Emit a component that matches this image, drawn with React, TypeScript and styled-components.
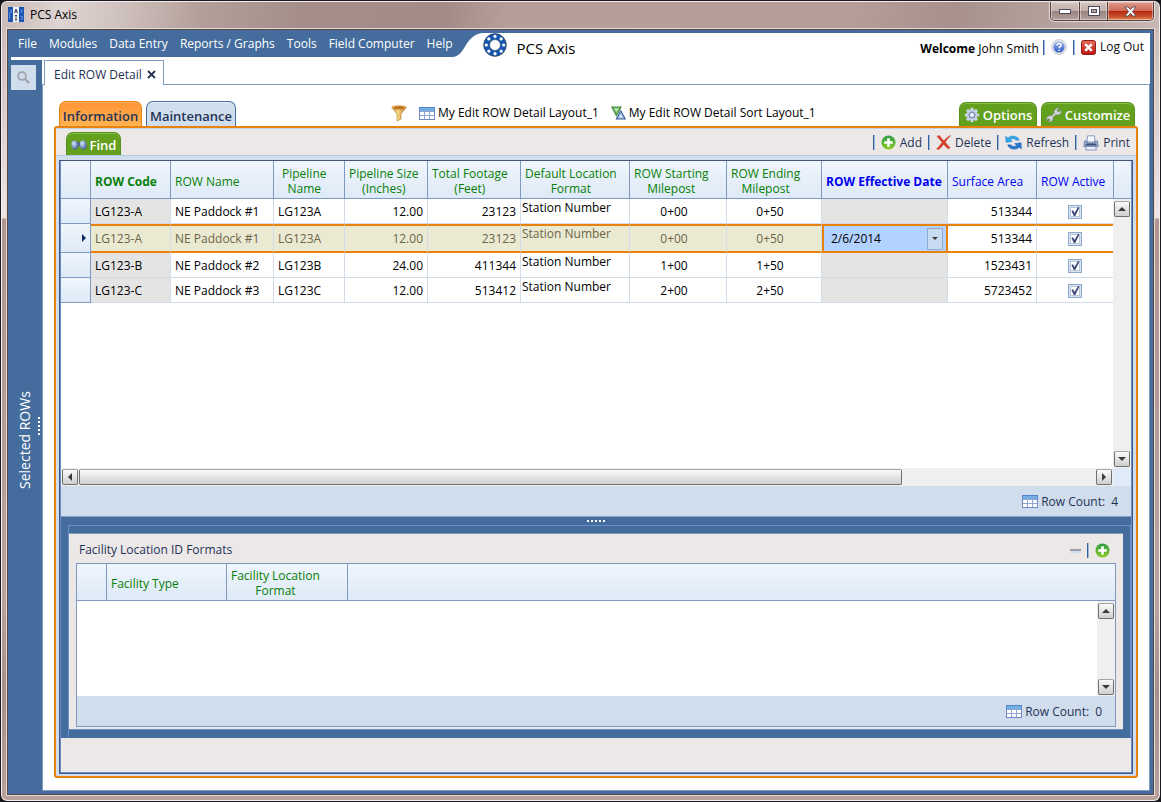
import React from 'react';
import styled, { createGlobalStyle, css } from 'styled-components';

const c = {
  blue: '#446c9c',
  line: '#8099c0',
  pale: '#d0dded',
  grey: '#ece8e7',
  orange: '#e8820c',
  navy: '#1f3357',
  green: '#62a01e',
};

const Global = createGlobalStyle`
  * { box-sizing: border-box; }
  html, body { margin: 0; padding: 0; background: #17161c; }
  body, button, input, table { font-family: "Open Sans", "Noto Sans", sans-serif; font-size: 12px; line-height: 16px; }
  button { padding: 0; border: 0; background: none; color: inherit; cursor: pointer; white-space: nowrap; }
  svg { display: block; flex: none; }
`;

/* ---------- window frame ---------- */

const WindowFrame = styled.div`
  min-height: 100vh;
  display: flex;
  flex-direction: column;
  padding: 0 6px 6px;
  border: 1px solid #1c1a20;
  border-radius: 7px;
  background: linear-gradient(180deg, #c9b8b4 0, #ddcfcd 120px, #f0e6e5 217px, #b0968f 218px, #b59d97 430px, #baa39d 600px, #a68f8a 690px, #b9a29c 800px);
  box-shadow: inset 0 0 0 1px #f3eceb;
`;

const TitleBar = styled.div`
  height: 27px;
  margin: 1px -5px 0;
  padding-left: 6px;
  display: flex;
  align-items: flex-start;
  border-radius: 6px 6px 0 0;
  background: linear-gradient(100deg, #c9bab6 0, #ded4d1 60px, #d2c5c1 110px, #b39e99 200px, #a58e89 300px, #a38c87 440px, #b79f99 500px, #b59e98 840px, #a8918c 940px, #b5a19c 1040px, #c9bcb9 1160px);
`;

const TitleText = styled.div`
  padding: 5px 0 0 6px;
  flex: 1;
  color: #000;
`;

const AppIcon = styled.div`
  padding-top: 5px;
`;

const WindowButtons = styled.div`
  display: flex;
  height: 19px;
  margin: 0 5px 0 0;
  border: 1px solid #55413f;
  border-top: 0;
  border-radius: 0 0 5px 5px;
  overflow: hidden;
  box-shadow: 0 0 1px 1px #e5dbd8;
`;

const WindowButton = styled.button<{ $close?: boolean }>`
  width: ${(p) => (p.$close ? 46 : 28)}px;
  display: flex;
  align-items: center;
  justify-content: center;
  background: ${(p) =>
    p.$close
      ? 'linear-gradient(180deg, #dc9a8b 0, #cf6c58 48%, #b3280f 52%, #c8502c 80%, #e08a58 100%)'
      : 'linear-gradient(180deg, #d3c4c1 0, #c2b0ac 48%, #99827e 52%, #b5a29d 100%)'};
  box-shadow: inset 0 0 0 1px rgba(255, 255, 255, 0.4);
  & + & { border-left: 1px solid #55413f; }
`;

const Client = styled.div`
  flex: 1;
  display: flex;
  flex-direction: column;
  padding: 0 3px 3px;
  border: 1px solid #584947;
  outline: 1px solid #e4dbd9;
  background: ${c.blue};
`;

/* ---------- menu bar ---------- */

const Header = styled.header`
  display: flex;
  height: 27px;
`;

const Menu = styled.nav`
  display: flex;
  align-items: center;
  gap: 12px;
  padding: 1px 0 0 7px;
  color: #fff;
`;

const Curve = styled.svg`
  margin-top: 3px;
`;

const Banner = styled.div`
  flex: 1;
  display: flex;
  align-items: center;
  margin-top: 3px;
  padding-right: 6px;
  background: #fff;
`;

const ProductName = styled.h1`
  margin: 0 auto 0 10px;
  font-size: 15px;
  line-height: 20px;
  font-weight: 400;
  color: #000;
  padding-top: 5px;
`;

const Welcome = styled.span`
  color: #000;
  white-space: nowrap;
  padding-top: 7px;
`;

const Separator = styled.span`
  width: 2px;
  height: 15px;
  background: linear-gradient(90deg, #34629a 50%, #9db8d8 50%);
`;

const BannerTools = styled.div`
  display: flex;
  align-items: center;
  gap: 6px;
  padding: 4px 0 0 4px;
  color: #101018;
`;

const ToolButton = styled.button`
  display: flex;
  align-items: center;
  gap: 4px;
  color: inherit;
`;

const Strip = styled.div`
  height: 3px;
  background: #fff;
`;

/* ---------- side bar ---------- */

const Body = styled.div`
  flex: 1;
  display: flex;
`;

const Sidebar = styled.aside`
  width: 31px;
  flex: none;
  display: flex;
  flex-direction: column;
  position: relative;
`;

const SearchButton = styled.button`
  width: 25px;
  height: 25px;
  margin-top: 5px;
  display: flex;
  align-items: center;
  justify-content: center;
  background: ${c.pale};
`;

const SideLabel = styled.div`
  flex: 1;
  width: 28px;
  display: flex;
  align-items: center;
  justify-content: center;
  writing-mode: vertical-rl;
  transform: rotate(180deg);
  font-size: 14px;
  color: #fff;
`;

const SideGrip = styled.div`
  position: absolute;
  right: 2px;
  top: calc(50% - 9px);
  width: 2px;
  height: 18px;
  background: repeating-linear-gradient(180deg, #fff 0, #fff 2px, transparent 2px, transparent 4px);
`;

/* ---------- document area ---------- */

const Content = styled.div`
  flex: 1;
  min-width: 0;
  display: flex;
  flex-direction: column;
  background: #fff;
`;

const DocTabs = styled.div`
  display: flex;
  height: 25px;
`;

const DocTabLine = styled.div<{ $grow?: boolean }>`
  ${(p) => (p.$grow ? 'flex: 1' : 'width: 2px')};
  border-bottom: 1px solid ${c.line};
`;

const DocTab = styled.div`
  width: 120px;
  display: flex;
  align-items: center;
  justify-content: space-between;
  padding: 3px 7px 0 9px;
  border: 1px solid ${c.line};
  border-bottom: 0;
  color: ${c.navy};
  white-space: nowrap;
`;

const Document = styled.main`
  flex: 1;
  display: flex;
  flex-direction: column;
  padding: 0 11px 12px;
  border: 1px solid ${c.line};
  border-top: 0;
`;

const PanelTabs = styled.div`
  display: flex;
  align-items: flex-end;
  gap: 4px;
  height: 41px;
  padding: 0 3px 0 5px;
`;

const tabBase = css`
  border-radius: 7px 7px 0 0;
  font-size: 13px;
  font-weight: 600;
  line-height: 18px;
  display: flex;
  align-items: center;
  justify-content: center;
  flex: none;
`;

const PanelTab = styled.button<{ $active?: boolean; $width: number }>`
  ${tabBase}
  height: 25px;
  padding-top: 3px;
  width: ${(p) => p.$width}px;
  color: ${c.navy};
  border: 1px solid ${(p) => (p.$active ? c.orange : '#4a6f9f')};
  border-bottom: 0;
  background: ${(p) => (p.$active ? 'linear-gradient(180deg, #ff9436, #ffb352)' : c.pale)};
  box-shadow: inset 0 1px 0 ${(p) => (p.$active ? '#ffae62' : '#e4edf8')};
`;

const GreenTab = styled.button<{ $width: number; $short?: boolean }>`
  ${tabBase}
  height: ${(p) => (p.$short ? 23 : 24)}px;
  width: ${(p) => p.$width}px;
  padding-top: 1px;
  gap: 3px;
  color: #fff;
  background: ${c.green};
  border: 1px solid #57931a;
  border-bottom: 0;
  box-shadow: inset 0 1px 0 #86bd4c;
`;

const LayoutTools = styled.div`
  flex: 1;
  display: flex;
  align-items: center;
  gap: 12px;
  height: 26px;
  margin-left: 151px;
  color: #000;
`;

const LayoutButton = styled(ToolButton)`
  gap: 3px;
`;

const Panel = styled.section`
  flex: 1;
  display: flex;
  flex-direction: column;
  border: 2px solid ${c.orange};
  border-radius: 3px;
  background: ${c.pale};
`;

const Toolbar = styled.div`
  height: 28px;
  display: flex;
  align-items: flex-end;
  justify-content: space-between;
  padding: 0 6px 0 10px;
  border-top: 1px solid #c4d2e4;
  border-bottom: 1px solid #b4c9e2;
  background: ${c.grey};
`;

const Actions = styled.div`
  display: flex;
  align-items: center;
  gap: 6px;
  height: 26px;
  padding-top: 1px;
  color: ${c.navy};
`;

const Frame = styled.div`
  flex: 1;
  display: flex;
  flex-direction: column;
  margin: 4px 3px 2px;
  border: 1px solid #46557f;
  box-shadow: inset 0 0 0 1px #6890cc;
  padding: 1px;
  padding-top: 0;
  background: ${c.grey};
`;

/* ---------- grid ---------- */

const headerFill = 'linear-gradient(180deg, #eff5fc, #deeaf7)';

const Grid = styled.div`
  flex: 1;
  display: flex;
  background: #fff;
`;

const GridBody = styled.div`
  flex: 1;
  min-width: 0;
`;

const Table = styled.table`
  width: 100%;
  table-layout: fixed;
  border-collapse: separate;
  border-spacing: 0;
`;

const HeadCell = styled.th<{ $tone?: 'green' | 'blue'; $bold?: boolean; $indent?: boolean; $short?: boolean }>`
  height: ${(p) => (p.$short ? 37 : 38)}px;
  padding: 2px 4px 0 ${(p) => (p.$indent ? 8 : 4)}px;
  line-height: 15px;
  font-weight: ${(p) => (p.$bold ? 700 : 400)};
  color: ${(p) => (p.$tone === 'blue' ? '#0000f0' : '#078007')};
  border-right: 1px solid ${c.line};
  border-bottom: 1px solid ${c.line};
  background: ${headerFill};
  text-align: left;
  white-space: nowrap;
  &:last-child { border-right: 0; }
`;

const HeadLabel = styled.span`
  display: inline-block;
  vertical-align: middle;
  text-align: center;
  white-space: pre-line;
`;

const RowHead = styled.th`
  padding: 0 4px 0 0;
  border-right: 1px solid ${c.line};
  border-bottom: 1px solid ${c.line};
  background: ${headerFill};
`;

const RowArrow = styled.span`
  display: block;
  width: 0;
  margin-left: auto;
  border: 4px solid transparent;
  border-left-color: #0b2a66;
  border-right: 0;
`;

const Cell = styled.td<{
  $align?: 'left' | 'right' | 'center';
  $locked?: boolean;
  $top?: boolean;
}>`
  height: 25px;
  padding: 1px ${(p) => (p.$align === 'center' ? 12 : 4)}px 0 ${(p) => (p.$top ? 1 : 4)}px;
  text-align: ${(p) => p.$align || 'left'};
  vertical-align: ${(p) => (p.$top ? 'top' : 'middle')};
  color: #000;
  background: ${(p) => (p.$locked ? '#e4e4e4' : '#fff')};
  border-right: 1px solid #d3dbe8;
  border-bottom: 1px solid #d3dbe8;
  white-space: nowrap;
  &:last-child { border-right: 0; }
`;

const Row = styled.tr<{ $current?: boolean }>`
  ${(p) =>
    p.$current &&
    css`
      ${Cell} {
        height: 29px;
        padding-top: 0;
        border-top: 2px solid ${c.orange};
        border-bottom: 2px solid ${c.orange};
      }
      ${Cell}:nth-child(-n + 9) {
        background: #eaead3;
        color: #6f6446;
      }
    `}
`;

const DateCell = styled(Cell)`
  padding: 0;
  background: #b2d2ff;
  border-left: 2px solid ${c.orange};
  border-right: 2px solid ${c.orange};
`;

const DateEditor = styled.div`
  display: flex;
  align-items: center;
  padding: 0 3px 0 7px;
`;

const DateInput = styled.input`
  flex: 1;
  min-width: 0;
  padding: 0;
  border: 0;
  outline: 0;
  background: transparent;
  color: #000;
`;

const DropButton = styled.button`
  width: 16px;
  height: 22px;
  display: flex;
  align-items: center;
  justify-content: center;
  border: 1px solid #93abca;
  background: #c9dbf0;
`;

const Caret = styled.span<{ $dir: 'up' | 'down' | 'left' | 'right'; $small?: boolean }>`
  width: 0;
  height: 0;
  border: ${(p) => (p.$small ? 3 : 4)}px solid transparent;
  ${(p) =>
    ({
      up: 'border-bottom-color: #3a3a3a; border-top: 0;',
      down: 'border-top-color: #3a3a3a; border-bottom: 0;',
      left: 'border-right-color: #3a3a3a; border-left: 0;',
      right: 'border-left-color: #3a3a3a; border-right: 0;',
    })[p.$dir]}
`;

const Check = styled.input.attrs({ type: 'checkbox' })`
  appearance: none;
  display: block;
  width: 14px;
  height: 14px;
  margin: 0 auto;
  border: 1px solid #8ea8cc;
  background: #fff;
  box-shadow: inset 0 0 0 1px #d6e3f2, inset 0 0 0 2px #b9c6d6;
  &:checked::before {
    content: '';
    display: block;
    width: 12px;
    height: 12px;
    background: #3d4a78;
    clip-path: polygon(20% 46%, 34% 40%, 46% 62%, 76% 10%, 86% 18%, 52% 88%, 40% 88%);
  }
`;

/* ---------- scroll bars ---------- */

const GridSide = styled.div`
  width: 18px;
  flex: none;
  display: flex;
  flex-direction: column;
`;

const HeadFill = styled.div`
  height: 38px;
  border-left: 1px solid ${c.line};
  border-bottom: 1px solid ${c.line};
  background: ${headerFill};
`;

const VScroll = styled.div`
  flex: 1;
  display: flex;
  flex-direction: column;
  justify-content: space-between;
  align-items: center;
  padding: 2px 0 1px;
  background: #efefef;
`;

const scrollFace = css`
  border: 1px solid #6f6f6f;
  border-top-color: #a5a5a5;
  border-radius: 2px;
  background: linear-gradient(180deg, #fafafa, #e4e4e4 50%, #cfcfcf);
`;

const ScrollButton = styled.button`
  width: 16px;
  height: 16px;
  flex: none;
  display: flex;
  align-items: center;
  justify-content: center;
  ${scrollFace}
`;

const HScroll = styled.div`
  display: flex;
  height: 18px;
  padding-right: 18px;
  background: #dfebf9;
`;

const HTrack = styled.div`
  flex: 1;
  display: flex;
  align-items: center;
  gap: 1px;
  padding: 0 1px;
  background: #efefef;
`;

const HLane = styled.div`
  flex: 1;
`;

const HThumb = styled.div`
  width: 81%;
  height: 16px;
  ${scrollFace}
`;

const Footer = styled.div`
  height: 30px;
  display: flex;
  align-items: center;
  justify-content: flex-end;
  gap: 3px;
  padding: 1px 13px 0 0;
  background: ${c.pale};
  color: ${c.navy};
`;

const Count = styled.span`
  padding-left: 3px;
`;

/* ---------- lower panel ---------- */

const Lower = styled.div`
  display: flex;
  flex-direction: column;
  padding: 0 0 1px 7px;
  border-top: 1px solid #8aa2c8;
  background: ${c.blue};
`;

const Splitter = styled.div`
  height: 8px;
  margin-left: -7px;
  display: flex;
  align-items: center;
  justify-content: center;
  &::before {
    content: '';
    width: 18px;
    height: 2px;
    background: repeating-linear-gradient(90deg, #fff 0, #fff 2px, transparent 2px, transparent 4px);
  }
`;

const Outline = styled.div`
  padding: 7px 7px 7px 0;
  border: 1px solid #6890cc;
  border-bottom: 0;
`;

const Facility = styled.section`
  background: ${c.grey};
  padding: 0 7px 2px;
  border-top: 1px solid #7c97bd;
  border-bottom: 1px solid #6890cc;
`;

const FacilityHead = styled.div`
  display: flex;
  align-items: center;
  justify-content: space-between;
  height: 29px;
  padding: 2px 6px 0 3px;
  color: ${c.navy};
`;

const FacilityTitle = styled.h2`
  margin: 0;
  font-size: 12px;
  line-height: 16px;
  font-weight: 400;
`;

const FacilityBox = styled.div`
  border: 1px solid ${c.line};
`;

const FacilityHeader = styled.div`
  background: ${headerFill};
`;

const FacilityBody = styled.div`
  display: flex;
  height: 95px;
  background: #fff;
`;

const FacilityEmpty = styled.div`
  flex: 1;
`;

const FacilityScroll = styled(VScroll)`
  flex: none;
  width: 18px;
`;

const Status = styled.div`
  height: 34px;
`;

/* ---------- icons ---------- */

const TableIcon = () => (
  <svg width="16" height="13" viewBox="0 0 16 13">
    <rect x=".5" y=".5" width="15" height="12" fill="#fff" stroke="#6f89c6" />
    <rect x="1" y="1" width="14" height="3" fill="#6fb0e4" />
    <path d="M1 4.5H15M1 8.5H15M5.5 1V12M10.5 1V12" stroke="#8fa5d2" fill="none" />
    <path d="M.5 .5H15.5" stroke="#4f86ca" />
  </svg>
);

const FunnelIcon = () => (
  <svg width="16" height="17" viewBox="0 0 16 17">
    <defs>
      <linearGradient id="fun" x1="0" x2="1">
        <stop offset="0" stopColor="#c07a1e" />
        <stop offset=".4" stopColor="#fbdc8c" />
        <stop offset="1" stopColor="#b8701c" />
      </linearGradient>
    </defs>
    <path d="M1 2.5L6 9V16L10 14V9L15 2.5Z" fill="url(#fun)" stroke="#b37a2a" strokeWidth=".6" />
    <ellipse cx="8" cy="2.5" rx="7.2" ry="1.8" fill="#e9a94a" stroke="#c98a35" strokeWidth=".7" />
    <ellipse cx="8" cy="2.7" rx="5" ry=".9" fill="#a8621a" />
  </svg>
);

const SortIcon = () => (
  <svg width="15" height="14" viewBox="0 0 15 14">
    <path d="M.8 1H10L5.4 9.5Z" fill="#7cc070" stroke="#3d8a40" strokeWidth="1.1" />
    <path d="M3.4 2.5H7.4L5.4 6Z" fill="#c6ebb9" />
    <path d="M5.4 13L9.8 4.8L14.2 13Z" fill="#9dbbe8" stroke="#3c5a9c" strokeWidth="1.1" />
    <path d="M7.8 11.6L9.8 8L11.8 11.6Z" fill="#dce8fa" />
  </svg>
);

const GearIcon = () => (
  <svg width="16" height="16" viewBox="0 0 16 16">
    <g fill="#c9d3e6">
      {[0, 45, 90, 135].map((a) => (
        <rect key={a} x="6.4" y=".8" width="3.2" height="14.4" rx=".8" transform={`rotate(${a} 8 8)`} />
      ))}
      <circle cx="8" cy="8" r="5.4" />
    </g>
    <circle cx="8" cy="8" r="3.6" fill="#8496bb" />
    <circle cx="8" cy="8" r="2" fill="#eef3fa" />
  </svg>
);

const WrenchIcon = () => (
  <svg width="16" height="16" viewBox="0 0 16 16">
    <path
      d="M13.2 1.2L10.8 3.4L12.6 5.2L15 2.9C15.8 5 14.8 7.2 12.8 7.8C11.7 8.1 10.6 7.9 9.8 7.6L6.9 10.4C7.3 12 6.6 13.8 5 14.5C4 15 2.9 15 2.2 14.7L4.2 12.9L2.9 11.4L.8 13.1C.3 11.4 1.1 9.6 2.7 9C3.6 8.6 4.6 8.7 5.4 9L8.3 6.1C7.8 4.4 8.7 2.3 10.3 1.5C11.2 1 12.3 .9 13.2 1.2Z"
      fill="#d5d9de"
      stroke="#7e8894"
      strokeWidth=".7"
    />
  </svg>
);

const BinocularsIcon = () => (
  <svg width="16" height="12" viewBox="0 0 16 12">
    <defs>
      <radialGradient id="lens" cx=".4" cy=".3" r=".7">
        <stop offset="0" stopColor="#dbe8fb" />
        <stop offset=".6" stopColor="#7f99c8" />
        <stop offset="1" stopColor="#46588c" />
      </radialGradient>
    </defs>
    <rect x="6" y="3" width="4" height="4" rx="1" fill="#50618f" />
    <ellipse cx="3.8" cy="6" rx="3.4" ry="4.6" fill="url(#lens)" transform="rotate(-14 4 6)" />
    <ellipse cx="12.2" cy="6" rx="3.4" ry="4.6" fill="url(#lens)" transform="rotate(-14 12 6)" />
  </svg>
);

const PlusIcon = ({ id }: { id: string }) => (
  <svg width="15" height="15" viewBox="0 0 15 15">
    <defs>
      <linearGradient id={id} x2="0" y2="1">
        <stop offset="0" stopColor="#2f9c4a" />
        <stop offset="1" stopColor="#8acb22" />
      </linearGradient>
    </defs>
    <circle cx="7.5" cy="7.5" r="7" fill={`url(#${id})`} />
    <path d="M7.5 3.2V11.8M3.2 7.5H11.8" stroke="#fff" strokeWidth="2.6" />
  </svg>
);

const DeleteIcon = () => (
  <svg width="15" height="15" viewBox="0 0 15 15">
    <path
      d="M1 1.2L3.4 .4C5 2.6 6.4 4.4 7.8 5.8C9.8 3.4 12 1.6 14.8 .4C12.6 2.6 10.6 4.8 9.2 7.2C11 9.4 12.6 11.2 14.2 12.8L12.2 13.8C10.6 12.6 9 10.8 7.6 9.2C6.2 11.2 4.4 13.4 2.6 14.6L.6 14C2.8 12 4.6 9.8 6.1 7.3C4.2 5.2 2.6 3.4 1 1.2Z"
      fill="#d8402a"
      stroke="#b92c1c"
      strokeWidth=".4"
    />
  </svg>
);

const RefreshIcon = () => (
  <svg width="17" height="15" viewBox="0 0 17 15">
    <path d="M.6 1.2L3 3C5 .6 9.6 .2 12.6 2.6C13.6 3.4 14.1 4.3 14.2 5.2H11C9.6 3.6 7.4 3.4 5.6 4.8L7.4 6.6L1 7.4Z" fill="#36a5e6" stroke="#2183c9" strokeWidth=".4" />
    <path d="M16.4 14L14 12.2C11.8 14.8 7.2 15 4.4 12.6C3.4 11.8 2.8 10.8 2.7 9.8H6C7.4 11.6 9.6 11.8 11.4 10.4L9.6 8.4L16.2 7.8Z" fill="#2b79cd" stroke="#1c5dab" strokeWidth=".4" />
  </svg>
);

const PrinterIcon = () => (
  <svg width="16" height="16" viewBox="0 0 16 16">
    <path d="M4.5 .8H11.5L12 7H4Z" fill="#f4f8fe" stroke="#7f95bf" strokeWidth=".9" />
    <path d="M1.6 6H4V8H12V6H14.4L15.2 11.6H.8Z" fill="#a9b8d6" stroke="#5d719f" strokeWidth=".8" />
    <rect x="2.6" y="8.6" width="10.8" height="2" fill="#3f507e" />
    <path d="M3.4 11.4H12.6L13.4 15H2.6Z" fill="#e8effa" stroke="#7186b3" strokeWidth=".8" />
  </svg>
);

const HelpIcon = () => (
  <svg width="16" height="16" viewBox="0 0 16 16">
    <defs>
      <linearGradient id="hlp" x2="0" y2="1">
        <stop offset="0" stopColor="#9db9f0" />
        <stop offset="1" stopColor="#2b58c0" />
      </linearGradient>
    </defs>
    <circle cx="8" cy="8" r="7.5" fill="#e2e4ea" stroke="#c2c5cf" strokeWidth=".8" />
    <circle cx="8" cy="8" r="5.6" fill="url(#hlp)" />
    <path d="M6 6.4C6 3.8 10.2 3.9 10.1 6.3C10 7.7 8.1 7.7 8.1 9.3" fill="none" stroke="#fff" strokeWidth="1.5" />
    <circle cx="8.1" cy="11.3" r=".9" fill="#fff" />
  </svg>
);

const LogoutIcon = () => (
  <svg width="15" height="15" viewBox="0 0 15 15">
    <defs>
      <linearGradient id="out" x2="0" y2="1">
        <stop offset="0" stopColor="#ea6a58" />
        <stop offset="1" stopColor="#b81410" />
      </linearGradient>
    </defs>
    <rect x=".5" y=".5" width="14" height="14" rx="2" fill="url(#out)" stroke="#8c2018" />
    <path d="M4.2 4.2L10.8 10.8M10.8 4.2L4.2 10.8" stroke="#fff" strokeWidth="2.4" />
  </svg>
);

const Logo = () => (
  <svg width="24" height="24" viewBox="0 0 24 24">
    <circle cx="12" cy="12" r="8.4" fill="none" stroke="#1557b0" strokeWidth="6" />
    <circle cx="12" cy="12" r="11.3" fill="none" stroke="#3a4250" strokeWidth=".7" />
    <circle cx="12" cy="12" r="5.4" fill="none" stroke="#3a4250" strokeWidth=".5" />
    {[0, 45, 90, 135, 180, 225, 270, 315].map((a) => (
      <circle key={a} cx="12" cy="3.3" r="1.6" fill="#fff" transform={`rotate(${a} 12 12)`} />
    ))}
  </svg>
);

const BrandIcon = () => (
  <svg width="16" height="15" viewBox="0 0 16 15">
    <rect width="5" height="15" fill="#1d55b0" />
    <rect x="5" width="6" height="15" fill="#f2f4f8" />
    <rect x="11" width="5" height="15" fill="#1d55b0" />
    <path d="M1.5 3.5H3.5V5.5H1.5V12M12.5 2.5L14.5 5.5M14.5 2.5L12.5 5.5M12.5 9.5H14.5V12H12.5" stroke="#6f9be0" fill="none" strokeWidth=".8" />
    <path d="M6.5 6L8 2L9.5 6M7 4.8H9M8 8.5V13M6.8 8.5H9.2M6.8 13H9.2" stroke="#2a3550" fill="none" strokeWidth=".9" />
  </svg>
);

const SearchIcon = () => (
  <svg width="13" height="13" viewBox="0 0 13 13">
    <circle cx="5" cy="5" r="3.9" fill="none" stroke="#a0a4aa" strokeWidth="1.8" />
    <path d="M8 8L12 12" stroke="#a0a4aa" strokeWidth="2.4" />
  </svg>
);

const CloseIcon = () => (
  <svg width="9" height="9" viewBox="0 0 9 9">
    <path d="M1 1L8 8M8 1L1 8" stroke="#25344f" strokeWidth="1.8" />
  </svg>
);

const MinimizeGlyph = () => (
  <svg width="13" height="5" viewBox="0 0 13 5">
    <rect x=".5" y=".5" width="11" height="4" fill="#fff" stroke="#4e4b5c" />
  </svg>
);

const MaximizeGlyph = () => (
  <svg width="12" height="10" viewBox="0 0 12 10">
    <rect x=".5" y=".5" width="11" height="9" fill="#fff" stroke="#4e4b5c" />
    <rect x="3.5" y="3.5" width="5" height="3" fill="#b5a29d" stroke="#4e4b5c" />
  </svg>
);

const CloseGlyph = () => (
  <svg width="13" height="11" viewBox="0 0 13 11">
    <path d="M1 1H4.2L6.5 3.6L8.8 1H12L8.4 5.5L12 10H8.8L6.5 7.4L4.2 10H1L4.6 5.5Z" fill="#fff" stroke="#5a4a52" strokeWidth=".9" />
  </svg>
);

const MinusGlyph = () => (
  <svg width="11" height="5" viewBox="0 0 11 5">
    <rect width="11" height="2" y="1" fill="#9aa0aa" />
    <rect width="11" height="2" y="3" fill="#cfdcec" />
  </svg>
);

/* ---------- data ---------- */

const menuItems = ['File', 'Modules', 'Data Entry', 'Reports / Graphs', 'Tools', 'Field Computer', 'Help'];

const columns: { label: string; width?: number; tone?: 'green' | 'blue'; bold?: boolean; indent?: boolean }[] = [
  { label: 'ROW Code', width: 80, bold: true },
  { label: 'ROW Name', width: 103 },
  { label: 'Pipeline\nName', width: 71, indent: true },
  { label: 'Pipeline Size\n(Inches)', width: 83 },
  { label: 'Total Footage\n(Feet)', width: 93 },
  { label: 'Default Location\nFormat', width: 109 },
  { label: 'ROW Starting\nMilepost', width: 97 },
  { label: 'ROW Ending\nMilepost', width: 95 },
  { label: 'ROW Effective Date', width: 126, tone: 'blue', bold: true },
  { label: 'Surface Area', width: 89, tone: 'blue' },
  { label: 'ROW Active', tone: 'blue' },
];

const rows = [
  { code: 'LG123-A', name: 'NE Paddock #1', pipe: 'LG123A', size: '12.00', feet: '23123', start: '0+00', end: '0+50', area: '513344' },
  { code: 'LG123-A', name: 'NE Paddock #1', pipe: 'LG123A', size: '12.00', feet: '23123', start: '0+00', end: '0+50', date: '2/6/2014', area: '513344' },
  { code: 'LG123-B', name: 'NE Paddock #2', pipe: 'LG123B', size: '24.00', feet: '411344', start: '1+00', end: '1+50', area: '1523431' },
  { code: 'LG123-C', name: 'NE Paddock #3', pipe: 'LG123C', size: '12.00', feet: '513412', start: '2+00', end: '2+50', area: '5723452' },
];

const RowCount = ({ value }: { value: number }) => (
  <Footer>
    <TableIcon />
    <span>Row Count:</span>
    <Count>{value}</Count>
  </Footer>
);

const MainGrid = () => (
  <>
    <Grid>
      <GridBody>
        <Table>
          <colgroup>
            <col style={{ width: 30 }} />
            {columns.map((col) => (
              <col key={col.label} style={{ width: col.width }} />
            ))}
          </colgroup>
          <thead>
            <tr>
              <HeadCell aria-label="Row selector" />
              {columns.map((col) => (
                <HeadCell key={col.label} scope="col" $tone={col.tone} $bold={col.bold} $indent={col.indent}>
                  <HeadLabel>{col.label}</HeadLabel>
                </HeadCell>
              ))}
            </tr>
          </thead>
          <tbody>
            {rows.map((r, i) => (
              <Row key={i} $current={!!r.date}>
                <RowHead scope="row">{r.date && <RowArrow />}</RowHead>
                <Cell $locked>{r.code}</Cell>
                <Cell>{r.name}</Cell>
                <Cell>{r.pipe}</Cell>
                <Cell $align="right">{r.size}</Cell>
                <Cell $align="right">{r.feet}</Cell>
                <Cell $top>Station Number</Cell>
                <Cell $align="center">{r.start}</Cell>
                <Cell $align="center">{r.end}</Cell>
                {r.date ? (
                  <DateCell>
                    <DateEditor>
                      <DateInput aria-label="ROW Effective Date" defaultValue={r.date} />
                      <DropButton aria-label="Open calendar">
                        <Caret $dir="down" $small />
                      </DropButton>
                    </DateEditor>
                  </DateCell>
                ) : (
                  <Cell $locked />
                )}
                <Cell $align="right">{r.area}</Cell>
                <Cell>
                  <Check defaultChecked aria-label="ROW Active" />
                </Cell>
              </Row>
            ))}
          </tbody>
        </Table>
      </GridBody>
      <GridSide>
        <HeadFill />
        <VScroll>
          <ScrollButton aria-label="Scroll up"><Caret $dir="up" /></ScrollButton>
          <ScrollButton aria-label="Scroll down"><Caret $dir="down" /></ScrollButton>
        </VScroll>
      </GridSide>
    </Grid>
    <HScroll>
      <HTrack>
        <ScrollButton aria-label="Scroll left"><Caret $dir="left" /></ScrollButton>
        <HLane><HThumb /></HLane>
        <ScrollButton aria-label="Scroll right"><Caret $dir="right" /></ScrollButton>
      </HTrack>
    </HScroll>
    <RowCount value={4} />
  </>
);

const FacilityPanel = () => (
  <Lower>
    <Splitter />
    <Outline>
      <Facility>
        <FacilityHead>
          <FacilityTitle>Facility Location ID Formats</FacilityTitle>
          <Actions>
            <button aria-label="Remove format"><MinusGlyph /></button>
            <Separator />
            <button aria-label="Add format"><PlusIcon id="plusB" /></button>
          </Actions>
        </FacilityHead>
        <FacilityBox>
          <FacilityHeader>
            <Table>
              <colgroup>
                <col style={{ width: 30 }} />
                <col style={{ width: 120 }} />
                <col style={{ width: 121 }} />
                <col />
              </colgroup>
              <thead>
                <tr>
                  <HeadCell $short aria-label="Row selector" />
                  <HeadCell $short scope="col"><HeadLabel>Facility Type</HeadLabel></HeadCell>
                  <HeadCell $short scope="col"><HeadLabel>{'Facility Location\nFormat'}</HeadLabel></HeadCell>
                  <HeadCell $short as="td" />
                </tr>
              </thead>
            </Table>
          </FacilityHeader>
          <FacilityBody>
            <FacilityEmpty />
            <FacilityScroll>
              <ScrollButton aria-label="Scroll up"><Caret $dir="up" /></ScrollButton>
              <ScrollButton aria-label="Scroll down"><Caret $dir="down" /></ScrollButton>
            </FacilityScroll>
          </FacilityBody>
          <RowCount value={0} />
        </FacilityBox>
      </Facility>
    </Outline>
  </Lower>
);

export default function App() {
  return (
    <WindowFrame>
      <Global />
      <TitleBar>
        <AppIcon><BrandIcon /></AppIcon>
        <TitleText>PCS Axis</TitleText>
        <WindowButtons>
          <WindowButton aria-label="Minimize"><MinimizeGlyph /></WindowButton>
          <WindowButton aria-label="Maximize"><MaximizeGlyph /></WindowButton>
          <WindowButton aria-label="Close" $close><CloseGlyph /></WindowButton>
        </WindowButtons>
      </TitleBar>
      <Client>
        <Header>
          <Menu>
            {menuItems.map((m) => (
              <button key={m}>{m}</button>
            ))}
          </Menu>
          <Curve width="30" height="24" viewBox="0 0 30 24">
            <path d="M0 24C7 23 9 18 13 12C17 5 23 0 30 0V24Z" fill="#fff" />
          </Curve>
          <Banner>
            <Logo />
            <ProductName>PCS Axis</ProductName>
            <Welcome><b>Welcome</b> John Smith</Welcome>
            <BannerTools>
              <Separator />
              <button aria-label="Help"><HelpIcon /></button>
              <Separator />
              <ToolButton><LogoutIcon />Log Out</ToolButton>
            </BannerTools>
          </Banner>
        </Header>
        <Strip />
        <Body>
          <Sidebar>
            <SearchButton aria-label="Search"><SearchIcon /></SearchButton>
            <SideLabel>Selected ROWs</SideLabel>
            <SideGrip />
          </Sidebar>
          <Content>
            <DocTabs>
              <DocTabLine />
              <DocTab>
                Edit ROW Detail
                <button aria-label="Close tab"><CloseIcon /></button>
              </DocTab>
              <DocTabLine $grow />
            </DocTabs>
            <Document>
              <PanelTabs>
                <PanelTab $active $width={83}>Information</PanelTab>
                <PanelTab $width={90}>Maintenance</PanelTab>
                <LayoutTools>
                  <button aria-label="Filter"><FunnelIcon /></button>
                  <LayoutButton><TableIcon />My Edit ROW Detail Layout_1</LayoutButton>
                  <LayoutButton><SortIcon />My Edit ROW Detail Sort Layout_1</LayoutButton>
                </LayoutTools>
                <GreenTab $width={78}><GearIcon />Options</GreenTab>
                <GreenTab $width={94}><WrenchIcon />Customize</GreenTab>
              </PanelTabs>
              <Panel>
                <Toolbar>
                  <GreenTab $short $width={55}><BinocularsIcon />Find</GreenTab>
                  <Actions>
                    <Separator />
                    <ToolButton><PlusIcon id="plusA" />Add</ToolButton>
                    <Separator />
                    <ToolButton><DeleteIcon />Delete</ToolButton>
                    <Separator />
                    <ToolButton><RefreshIcon />Refresh</ToolButton>
                    <Separator />
                    <ToolButton><PrinterIcon />Print</ToolButton>
                  </Actions>
                </Toolbar>
                <Frame>
                  <MainGrid />
                  <FacilityPanel />
                  <Status />
                </Frame>
              </Panel>
            </Document>
          </Content>
        </Body>
      </Client>
    </WindowFrame>
  );
}
